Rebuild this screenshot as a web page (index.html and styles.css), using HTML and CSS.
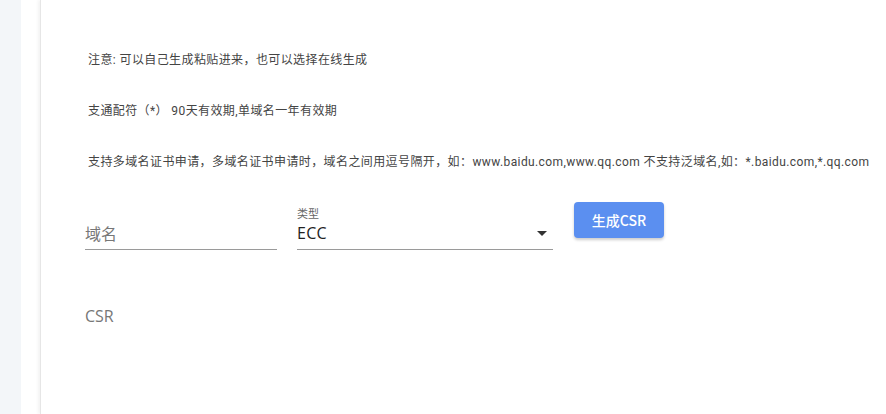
FILE: index.html
```html
<!DOCTYPE html>
<html lang="zh">
<head>
<meta charset="utf-8">
<link rel="stylesheet" href="styles.css">
</head>
<body>
<div class="shell">
  <div class="card">
    <div class="notes">
      <p class="note">注意: 可以自己生成粘贴进来，也可以选择在线生成</p>
      <p class="note">支通配符（*） 90天有效期,单域名一年有效期</p>
      <p class="note">支持多域名证书申请，多域名证书申请时，域名之间用逗号隔开，如：www.baidu.com,www.qq.com 不支持泛域名,如：*.baidu.com,*.qq.com</p>
    </div>
    <div class="form-row">
      <div class="field domain">
        <div class="field-label"></div>
        <div class="field-input"><span class="placeholder">域名</span></div>
      </div>
      <div class="field select">
        <div class="field-label">类型</div>
        <div class="field-input"><span class="value">ECC</span><span class="arrow"></span></div>
      </div>
      <button class="btn">生成CSR</button>
    </div>
    <div class="csr-label">CSR</div>
  </div>
</div>
</body>
</html>
```
FILE: styles.css
```css
html, body {
  margin: 0;
  height: 100%;
}
body {
  background: #f3f6f9;
  font-family: "Roboto", "Noto Sans CJK SC", sans-serif;
  overflow: hidden;
}
.shell {
  margin-left: 21px;
  height: 100%;
  background: #ffffff;
  padding-left: 19px;
}
.card {
  height: 100%;
  background: #ffffff;
  border-left: 1px solid #e6e6e6;
  box-shadow: -2px 0 3px rgba(0, 0, 0, 0.05);
  padding: 51px 0 0 47px;
  box-sizing: border-box;
  display: flex;
  flex-direction: column;
}
.notes {
  display: flex;
  flex-direction: column;
  gap: 33px;
}
.note {
  margin: 0;
  font-size: 12px;
  line-height: 18px;
  color: #444;
  white-space: nowrap;
  letter-spacing: 0.4px;
}
.form-row {
  display: flex;
  align-items: flex-start;
  margin-top: 31px;
  margin-left: -3px;
}
.field {
  display: flex;
  flex-direction: column;
  padding-top: 4px;
}
.field.domain { width: 192px; }
.field.select { width: 256px; margin-left: 20px; }
.field-label {
  height: 14px;
  font-size: 11px;
  line-height: 14px;
  color: #666;
  font-family: "Noto Sans CJK SC", sans-serif;
}
.field-input {
  height: 30px;
  padding-bottom: 3px;
  box-sizing: border-box;
  border-bottom: 1px solid #9a9a9a;
  display: flex;
  align-items: center;
  justify-content: space-between;
  font-size: 16px;
}
.placeholder {
  color: #777;
  font-size: 16px;
  font-family: "Noto Sans CJK SC", sans-serif;
}
.value {
  color: #222;
  font-family: "Open Sans", "Noto Sans", sans-serif;
  font-size: 16px;
  letter-spacing: 0.3px;
}
.arrow {
  width: 0;
  height: 0;
  border-left: 5px solid transparent;
  border-right: 5px solid transparent;
  border-top: 5px solid #333;
  margin-right: 6px;
}
.btn {
  margin-left: 21px;
  width: 90px;
  height: 36px;
  border: none;
  border-radius: 4px;
  background: #5b8ff0;
  color: #fff;
  font-family: "Noto Sans CJK SC", "Open Sans", sans-serif;
  font-size: 14px;
  font-weight: 500;
  box-shadow: 0 2px 3px rgba(0, 0, 0, 0.2);
  padding: 0;
}
.csr-label {
  margin-top: 55px;
  margin-left: -3px;
  font-family: "Open Sans", "Noto Sans", sans-serif;
  font-size: 16px;
  color: #777;
}
```
